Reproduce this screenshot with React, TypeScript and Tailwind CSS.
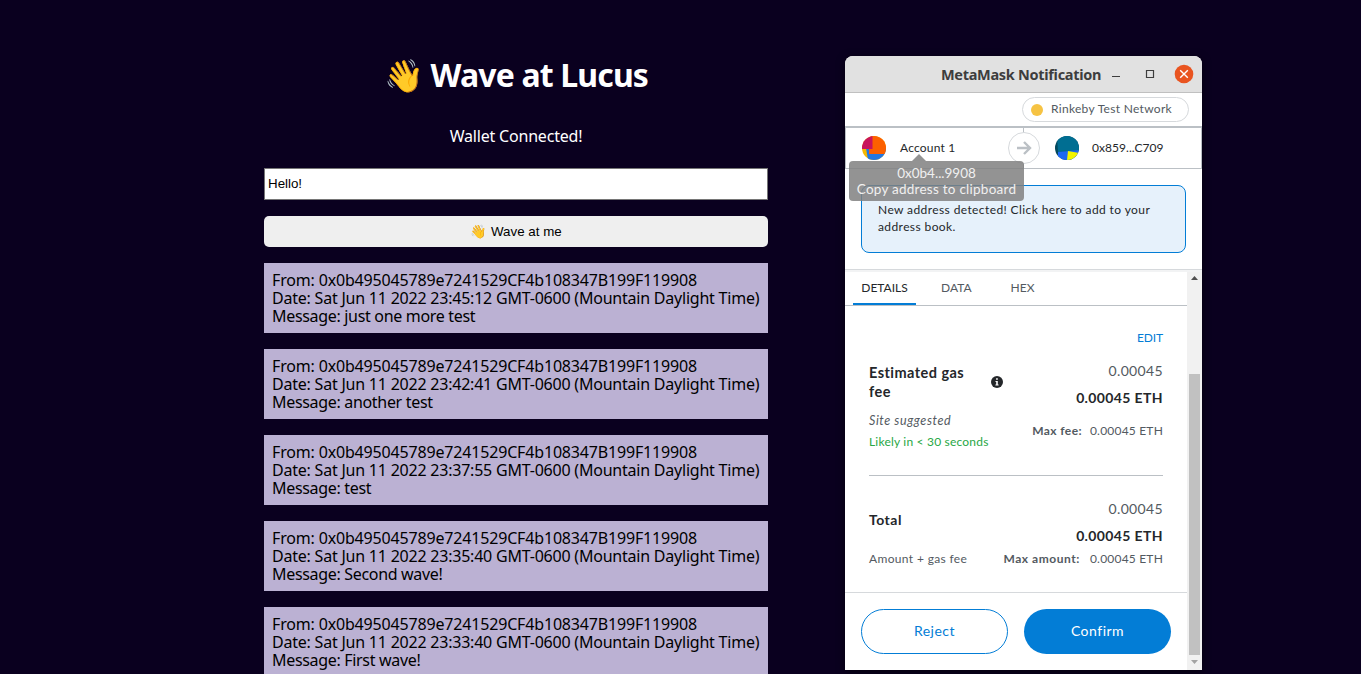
import type { ReactNode } from "react";

const FROM = "0x0b495045789e7241529CF4b108347B199F119908";

const waves = [
  { time: "23:45:12", message: "just one more test" },
  { time: "23:42:41", message: "another test" },
  { time: "23:37:55", message: "test" },
  { time: "23:35:40", message: "Second wave!" },
  { time: "23:33:40", message: "First wave!" },
];

function Portal() {
  return (
    <main className="ml-[264px] flex w-[504px] shrink-0 flex-col pt-[51px] font-['Noto_Sans',sans-serif]">
      <h1 className="flex h-12 shrink-0 items-center justify-center text-[32px] font-bold leading-none text-white">
        <span className="whitespace-pre tracking-[-0.85px]">👋 Wave at Lucus</span>
      </h1>
      <p className="mt-[26px] h-[22px] shrink-0 text-center text-base leading-[22px] tracking-[-0.2px] text-white">
        Wallet Connected!
      </p>
      <input
        defaultValue="Hello!"
        className="mt-[21px] h-8 shrink-0 border border-[#767676] bg-white px-[3px] pb-px font-['Liberation_Sans',sans-serif] text-[13.33px] text-black"
      />
      <button className="mt-4 h-[31px] shrink-0 rounded-[5px] bg-[#efefef] font-['Liberation_Sans',sans-serif] text-[13.33px] text-black">
        👋 Wave at me
      </button>
      {waves.map((w) => (
        <article key={w.time} className="mt-4 h-[70px] shrink-0 whitespace-nowrap bg-[#bbb1d3] p-2 text-base leading-[18px] text-black">
          <div className="tracking-[-0.17px]">From: {FROM}</div>
          <div className="tracking-[-0.22px]">Date: Sat Jun 11 2022 {w.time} GMT-0600 (Mountain Daylight Time)</div>
          <div className="tracking-[-0.32px]">Message: {w.message}</div>
        </article>
      ))}
    </main>
  );
}

function TitleBar() {
  return (
    <header className="flex h-[37px] shrink-0 items-center border-b border-[#c0c0c0] bg-[#e1e1e1] pl-24 font-['Noto_Sans',sans-serif]">
      <span className="mt-px w-[161px] whitespace-nowrap text-[14.5px] font-bold tracking-[-0.3px] text-[#3d3d3d]">MetaMask Notification</span>
      <svg className="ml-2.5 h-5 w-[84px]" viewBox="0 0 84 20" fill="none">
        <path d="M0 12.5h8" stroke="#3d3d3d" />
        <path d="M34.5 6.5h7v7h-7z" stroke="#3d3d3d" strokeWidth="1.2" />
        <circle cx="72" cy="10" r="9.3" fill="#e95420" />
        <path d="m68.2 6.2 7.6 7.6m0-7.6-7.6 7.6" stroke="#fff" strokeWidth="1.4" />
      </svg>
    </header>
  );
}

function Tooltip() {
  return (
    <div className="absolute left-1 top-[98px] z-10 h-[47px] w-[175px]">
      <svg className="mx-auto block h-[7px] w-full" viewBox="0 0 175 7">
        <path d="M63 7 70 0l7 7z" fill="#808080" fillOpacity=".86" />
      </svg>
      <div className="h-10 rounded bg-[#808080]/85 pt-1 text-center text-[13.5px] leading-4 text-[#f0f0f0]">
        <div>0x0b4...9908</div>
        <div className="whitespace-nowrap tracking-[0.25px]">Copy address to clipboard</div>
      </div>
    </div>
  );
}

function Accounts() {
  return (
    <section className="flex h-[43px] shrink-0 items-center border border-t-2 border-[#bbc0c5]">
      <svg className="ml-4 h-6 w-6 shrink-0" viewBox="0 0 24 24">
        <clipPath id="from"><circle cx="12" cy="12" r="12" /></clipPath>
        <g clipPath="url(#from)">
          <path d="M0 0h24v24H0z" fill="#f5b800" />
          <path d="M4 12h20v12H6z" fill="#2377e1" />
          <path d="M7 0h17v18H7z" fill="#fc6000" />
          <path d="M0 0h10.5v13H0z" fill="#c8145c" />
        </g>
      </svg>
      <span className="ml-3.5 w-[93px] whitespace-nowrap text-xs tracking-[0.2px] text-[#24272a]">Account 1</span>
      <div className="relative ml-[15px] flex h-full w-8 items-center">
        <i className="absolute left-[15px] top-0 h-full w-px bg-[#bbc0c5]" />
        <svg className="relative h-8 w-8" viewBox="0 0 32 32" fill="none">
          <circle cx="16" cy="16" r="15.5" fill="#fff" stroke="#d6d9dc" />
          <path d="M9 16h13M16 10l6 6-6 6" stroke="#bbc0c5" strokeWidth="2.4" />
        </svg>
      </div>
      <svg className="ml-[15px] h-6 w-6 shrink-0" viewBox="0 0 24 24">
        <clipPath id="to"><circle cx="12" cy="12" r="12" /></clipPath>
        <g clipPath="url(#to)">
          <path d="M0 0h24v24H0z" fill="#03495e" />
          <path d="m2 0 22-1v16L3 16z" fill="#006e92" />
          <path d="m3 16 21-2v10H3z" fill="#1c68f3" />
          <path d="m13 15 11 2v7H12z" fill="#f3f500" />
        </g>
      </svg>
      <span className="ml-[13px] whitespace-nowrap text-xs tracking-[0.05px] text-[#24272a]">0x859...C709</span>
    </section>
  );
}

function Amounts({ label, rowClass, labelClass }: { label: ReactNode; rowClass: string; labelClass: string }) {
  return (
    <div className="flex flex-col items-end whitespace-nowrap text-[#535a61]">
      <span className="text-sm leading-5 tracking-[0.35px]">0.00045</span>
      <span className="mt-[7px] text-sm font-bold leading-5 tracking-[0.38px] text-[#24272a]">0.00045 ETH</span>
      <span className={rowClass}>
        <b className={labelClass}>{label}</b>
        <span className="tracking-[0.2px]">0.00045 ETH</span>
      </span>
    </div>
  );
}

function Notification() {
  return (
    <aside className="absolute left-[845px] top-14 flex h-[614px] w-[357px] flex-col overflow-hidden rounded-t-lg bg-white font-[Lato,sans-serif] shadow-[0_2px_8px_rgba(0,0,0,.6)]">
      <TitleBar />
      <div className="flex h-[33px] shrink-0 items-center justify-end pr-[13px]">
        <div className="flex h-[25px] w-[167px] items-center rounded-full border border-[#d6d9dc] pl-2">
          <i className="h-3 w-3 rounded-full bg-[#f6c343]" />
          <span className="mb-0.5 ml-2 whitespace-nowrap text-xs tracking-[0.3px] text-[#535a61]">Rinkeby Test Network</span>
        </div>
      </div>
      <Accounts />
      <Tooltip />
      <div className="mx-4 mt-4 h-[68px] shrink-0 rounded-lg border border-[#037dd6] bg-[#e6f1fb] px-4 pt-[15px] text-xs leading-[17px] tracking-[0.4px] text-[#24272a]">
        New address detected! Click here to add to your address book.
      </div>
      <div className="mt-4 h-[3px] shrink-0 border-t border-[#d6d9dc] bg-[#f2f3f4]" />
      <div className="flex min-h-0 flex-1">
        <div className="flex w-[342px] flex-col">
          <nav className="flex h-[34px] shrink-0 border-b border-[#bbc0c5] pl-2 text-xs leading-8 text-[#535a61]">
            <span className="w-[63px] border-b-2 border-[#037dd6] text-center text-[#24272a]">DETAILS</span>
            <span className="ml-[25px]">DATA</span>
            <span className="ml-[39px]">HEX</span>
          </nav>
          <div className="mx-6 flex h-[170px] shrink-0 flex-col border-b border-[#bbc0c5]">
            <span className="mt-6 self-end text-xs leading-4 tracking-[-0.1px] text-[#037dd6]">EDIT</span>
            <div className="mt-[15px] flex justify-between">
              <div className="w-[134px] pt-0.5">
                <div className="flex items-center justify-between">
                  <b className="w-28 whitespace-nowrap text-[14.5px] leading-[19px] tracking-[0.45px] text-[#24272a]">Estimated gas<br />fee</b>
                  <svg className="h-3 w-3" viewBox="0 0 12 12">
                    <circle cx="6" cy="6" r="6" fill="#24272a" />
                    <path d="M5.1 2.2h1.7v1.6H5.1zM4.5 5h2.3v3.5h.8v1H4.4v-1h.8V6h-.7z" fill="#fff" />
                  </svg>
                </div>
                <div className="mt-2.5 text-[12.5px] italic leading-5 tracking-[0.6px] text-[#535a61]">Site suggested</div>
                <div className="mt-px whitespace-nowrap text-xs leading-5 tracking-[0.2px] text-[#28a745]">Likely in &lt; 30 seconds</div>
              </div>
              <Amounts label="Max fee:" rowClass="mt-[13px] text-xs leading-5" labelClass="mr-2 tracking-[0.4px]" />
            </div>
          </div>
          <div className="mx-6 flex h-[116px] shrink-0 justify-between pt-[23px]">
            <div className="flex flex-col">
              <b className="mt-[11px] text-sm leading-5 tracking-[0.5px] text-[#24272a]">Total</b>
              <span className="mt-[19px] whitespace-nowrap text-xs leading-5 tracking-[0.35px] text-[#535a61]">Amount + gas fee</span>
            </div>
            <Amounts label="Max amount:" rowClass="mt-[3px] text-xs leading-5" labelClass="mr-2.5 tracking-[0.55px]" />
          </div>
          <footer className="flex flex-1 gap-4 border-t border-[#d6d9dc] px-4 pt-4 text-sm tracking-[0.5px]">
            <button className="h-[45px] w-[147px] rounded-full border border-[#037dd6] pb-0.5 text-[#037dd6]">Reject</button>
            <button className="h-[45px] w-[147px] rounded-full bg-[#037dd6] pb-0.5 text-white">Confirm</button>
          </footer>
        </div>
        <div className="flex w-[15px] flex-col items-center bg-[#f1f1f1]">
          <svg className="h-[102px] w-[15px]" viewBox="0 0 15 102"><path d="M4 8h7L7.5 4z" fill="#505050" /></svg>
          <i className="h-[281px] w-[11px] bg-[#c1c1c1]" />
          <svg className="h-[15px] w-[15px]" viewBox="0 0 15 15"><path d="M4 5h7L7.5 9z" fill="#a3a3a3" /></svg>
        </div>
      </div>
    </aside>
  );
}

export default function App() {
  return (
    <div className="relative flex h-[674px] w-full overflow-hidden bg-[#0a001f]">
      <Portal />
      <Notification />
    </div>
  );
}
